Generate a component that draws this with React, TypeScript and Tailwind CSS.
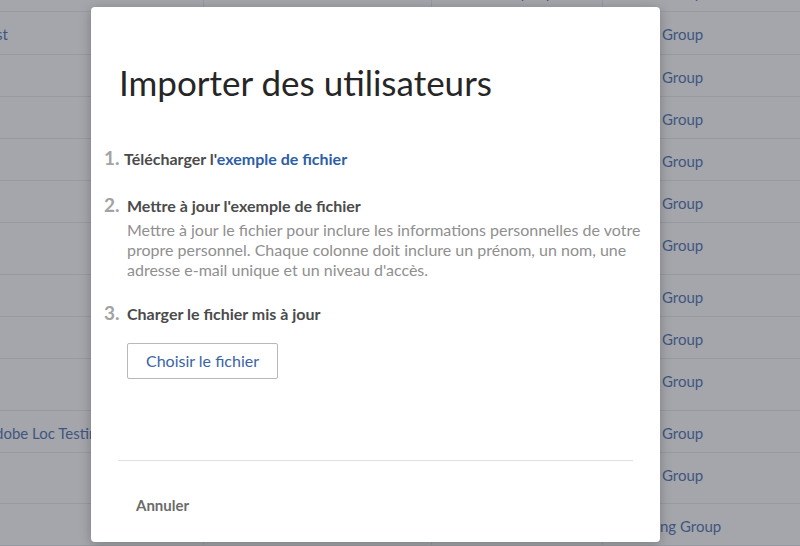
const rows: { h: string; a: string; apl: string; c: string; d: string; dpl: string }[] = [
  { h: 'h-[42px]', a: 'Adobe Admin', apl: 'pl-[21px]', c: 'Company', d: 'Default Group', dpl: 'pl-[6px]' },
  { h: 'h-[43px]', a: 'Test', apl: 'pl-[21px]', c: '', d: 'Default Group', dpl: 'pl-[6px]' },
  { h: 'h-[42px]', a: '', apl: 'pl-[21px]', c: '', d: 'Default Group', dpl: 'pl-[6px]' },
  { h: 'h-[42px]', a: '', apl: 'pl-[21px]', c: '', d: 'Default Group', dpl: 'pl-[6px]' },
  { h: 'h-[42px]', a: '', apl: 'pl-[21px]', c: '', d: 'Default Group', dpl: 'pl-[6px]' },
  { h: 'h-[42px]', a: '', apl: 'pl-[21px]', c: '', d: 'Default Group', dpl: 'pl-[6px]' },
  { h: 'h-[52px]', a: '', apl: 'pl-[21px]', c: '', d: 'Default Group', dpl: 'pl-[6px]' },
  { h: 'h-[42px]', a: '', apl: 'pl-[21px]', c: '', d: 'Default Group', dpl: 'pl-[6px]' },
  { h: 'h-[42px]', a: '', apl: 'pl-[21px]', c: '', d: 'Default Group', dpl: 'pl-[6px]' },
  { h: 'h-[52px]', a: '', apl: 'pl-[21px]', c: '', d: 'Default Group', dpl: 'pl-[6px]' },
  { h: 'h-[42px]', a: 'Adobe Loc Testing', apl: 'pl-[25px]', c: '', d: 'Default Group', dpl: 'pl-[6px]' },
  { h: 'h-[51px]', a: '', apl: 'pl-[21px]', c: '', d: 'Default Group', dpl: 'pl-[6px]' },
  { h: 'h-[42px]', a: '', apl: 'pl-[21px]', c: '', d: 'Loc Testing Group', dpl: 'pl-0' },
]

function BackgroundTable() {
  return (
    <div className="-mt-[30px] -ml-[40px] flex flex-col font-['Lato',sans-serif] text-[15px] leading-[20px] text-[#3f5680]">
      {rows.map((r, i) => (
        <div key={i} className={`flex ${r.h} border-b border-[#979aa0]`}>
          <div className={`w-[244px] shrink-0 border-r border-[#979aa0] ${r.apl} pt-[12px] whitespace-nowrap`}>{r.a}</div>
          <div className="w-[228px] shrink-0 border-r border-[#979aa0] pt-[12px]"></div>
          <div className="w-[171px] shrink-0 border-r border-[#979aa0] pl-[58px] pt-[12px] whitespace-nowrap">{r.c}</div>
          <div className={`w-[197px] shrink-0 ${r.dpl} pt-[12px] whitespace-nowrap`}>{r.d}</div>
        </div>
      ))}
    </div>
  )
}

function StepHead({ n, w, children }: { n: string; w: string; children: React.ReactNode }) {
  return (
    <div className="flex items-baseline leading-[22px]">
      <span className={`${w} shrink-0 text-[19px] font-bold text-[#a3a3a3]`}>{n}</span>
      <span className="font-bold">{children}</span>
    </div>
  )
}

function ImportDialog() {
  return (
    <div className="absolute left-[91px] top-[7px] flex h-[535px] w-[569px] flex-col rounded-[4px] bg-white shadow-[0_2px_12px_rgba(0,0,0,0.25)]">
      <h1 className="pl-[28px] pt-[55px] font-['Lato',sans-serif] text-[35px] leading-[40px] text-[#262626]">
        Importer des utilisateurs
      </h1>

      <div className="mt-[45px] flex flex-col pl-[13px] pr-[8px] font-['Lato',sans-serif] text-[16px] text-[#4b4b4b]">
        <StepHead n="1." w="w-[20px]">
          Télécharger l'<span className="text-[#2d5ea6]">exemple de fichier</span>
        </StepHead>

        <div className="mt-[24px]">
          <StepHead n="2." w="w-[23px]">Mettre à jour l'exemple de fichier</StepHead>
          <p className="mt-[3px] pl-[23px] leading-[20px] text-[#8f8f8f]">
            Mettre à jour le fichier pour inclure les informations personnelles de votre propre personnel. Chaque colonne doit inclure un prénom, un nom, une adresse e-mail unique et un niveau d'accès.
          </p>
        </div>

        <div className="mt-[22px]">
          <StepHead n="3." w="w-[23px]">Charger le fichier mis à jour</StepHead>
          <div className="mt-[18px] pl-[23px]">
            <button className="h-[36px] w-[151px] rounded-[2px] border border-[#b8b8b8] text-[16px] text-[#3a64a6]">
              Choisir le fichier
            </button>
          </div>
        </div>
      </div>

      <div className="mx-[27px] mt-auto border-t border-[#e0e0e0]" />
      <div className="px-[45px] pb-[26px] pt-[33px] font-['Lato',sans-serif] text-[15px] font-bold text-[#6b6b6b]">
        Annuler
      </div>
    </div>
  )
}

export default function App() {
  return (
    <div className="relative h-[546px] w-[800px] overflow-hidden bg-[#a4a6ab]">
      <BackgroundTable />
      <ImportDialog />
    </div>
  )
}
